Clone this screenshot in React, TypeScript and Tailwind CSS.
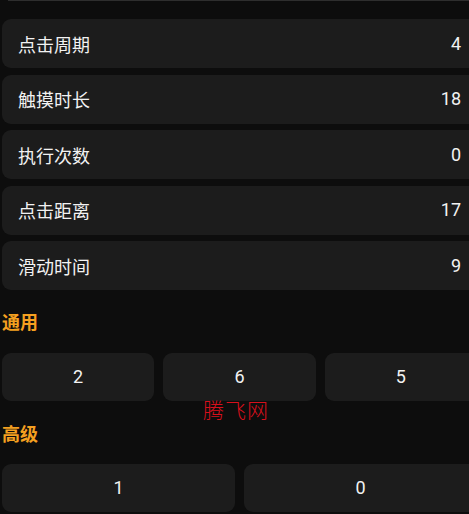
const rows = [
  { label: "点击周期", value: "4" },
  { label: "触摸时长", value: "18" },
  { label: "执行次数", value: "0" },
  { label: "点击距离", value: "17" },
  { label: "滑动时间", value: "9" },
]

const font = { fontFamily: '"Noto Sans CJK SC", Roboto, sans-serif' }

export default function App() {
  return (
    <div
      className="relative w-[469px] h-[514px] overflow-hidden bg-[#0d0d0d] text-[#f2f2f2]"
      style={font}
    >
      <div className="w-[477px] pl-[2px]">
        <div className="h-px ml-[6px] bg-[#2e2e2e]" />

        <div className="mt-[18px] flex flex-col gap-[6.5px]">
          {rows.map((r) => (
            <div
              key={r.label}
              className="h-[49px] flex items-center justify-between pl-4 pr-4 rounded-[9px] bg-[#1c1c1c]"
            >
              <span className="text-[18px] leading-[18px]">{r.label}</span>
              <span className="text-[18px] leading-[18px] font-['Roboto']">{r.value}</span>
            </div>
          ))}
        </div>

        <h2 className="mt-[21.5px] text-[18px] leading-[18px] font-bold text-[#f5a020]">通用</h2>
        <div className="mt-[23px] grid grid-cols-3 gap-[9px]">
          {["2", "6", "5"].map((n) => (
            <div
              key={n}
              className="h-[48px] flex items-center justify-center rounded-[9px] bg-[#1c1c1c] text-[18px] font-['Roboto']"
            >
              {n}
            </div>
          ))}
        </div>

        <h2 className="mt-[23px] text-[18px] leading-[18px] font-bold text-[#f5a020]">高级</h2>
        <div className="mt-[22px] grid grid-cols-2 gap-[9px]">
          {["1", "0"].map((n) => (
            <div
              key={n}
              className="h-[48px] flex items-center justify-center rounded-[9px] bg-[#1c1c1c] text-[18px] font-['Roboto']"
            >
              {n}
            </div>
          ))}
        </div>
      </div>

      <div className="absolute left-[203px] top-[397px] text-[21px] leading-[24px] text-[#d8101c] font-light tracking-[1px]">
        腾飞网
      </div>
    </div>
  )
}
